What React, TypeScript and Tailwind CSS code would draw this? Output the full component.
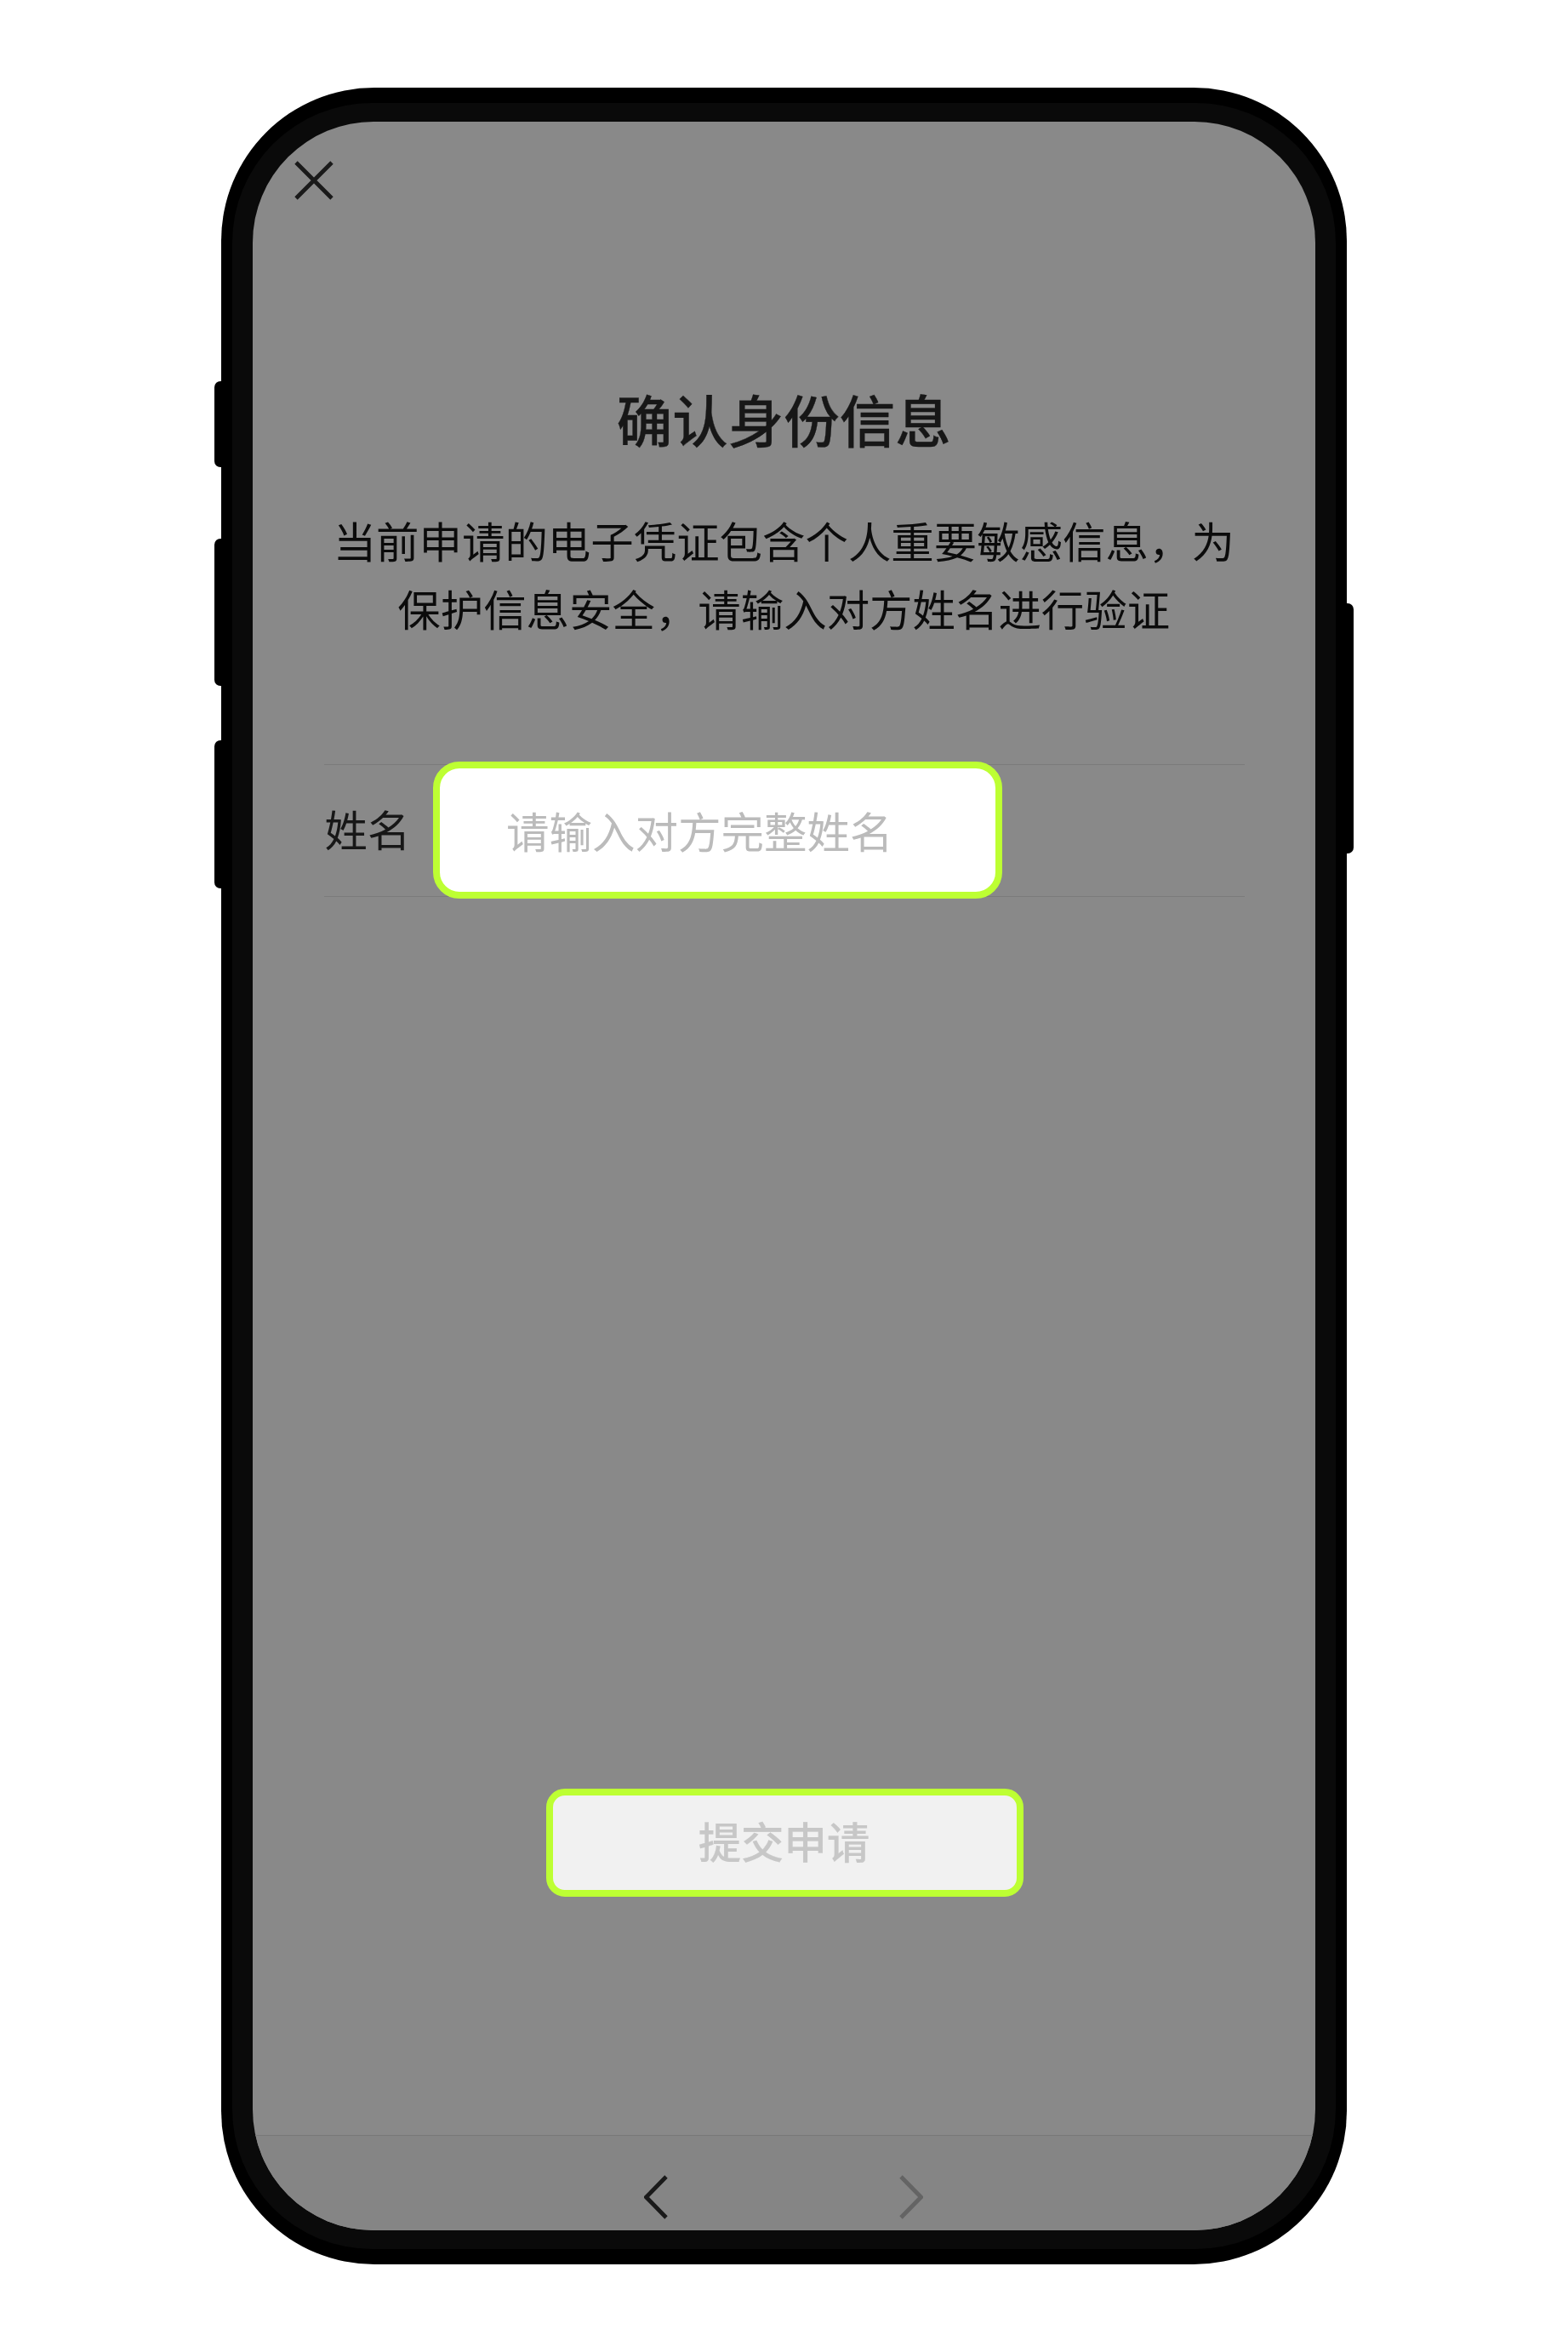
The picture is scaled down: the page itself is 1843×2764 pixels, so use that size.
import type { ReactNode } from "react";

const LEFT_KEYS = ["h-[101px]", "mt-[84px] h-[173.5px]", "mt-[64px] h-[173.5px]"];

function PhoneFrame({ children }: { children: ReactNode }) {
  return (
    <div className="flex items-start pl-[252px] pt-[102.5px]">
      <div className="flex w-2 flex-col pt-[345px]">
        {LEFT_KEYS.map((key) => (
          <div key={key} className={`w-full shrink-0 rounded-l-[7px] bg-black ${key}`} />
        ))}
      </div>
      <div className="h-[2558.5px] w-[1322.5px] rounded-[180px] bg-black px-[13px] py-[18px]">
        <div className="h-full w-full rounded-[164px] bg-[#0a0a0a] px-[24px] py-[22.5px]">
          <div className="flex h-full w-full flex-col overflow-hidden rounded-[142px] bg-[#898989]">
            {children}
          </div>
        </div>
      </div>
      <div className="mt-[606px] h-[294px] w-2 rounded-r-[7px] bg-black" />
    </div>
  );
}

function Chevron({ direction, tone }: { direction: "left" | "right"; tone: string }) {
  return (
    <svg width="28" height="52" viewBox="0 0 28 52" fill="none" className={tone}>
      <path
        d={direction === "left" ? "M26 2 2.5 26 26 50" : "M2 2 25.5 26 2 50"}
        stroke="currentColor"
        strokeWidth="4.8"
      />
    </svg>
  );
}

export default function App() {
  return (
    <main className="h-[2764px] w-[1843px] overflow-hidden bg-white font-['Noto_Sans_CJK_SC',sans-serif]">
      <PhoneFrame>
        <header className="h-[304px] shrink-0 pl-[49px] pt-[46px]">
          <button aria-label="关闭" className="block text-[#1a1a1a]">
            <svg width="46" height="46" viewBox="0 0 46 46" fill="none">
              <path d="M2 2 44 44M44 2 2 44" stroke="currentColor" strokeWidth="4.8" />
            </svg>
          </button>
        </header>

        <section className="flex shrink-0 flex-col items-center text-center">
          <h1 className="text-[65.5px] font-medium leading-[90px] text-[#171717] [-webkit-text-stroke:0.3px_#171717]">
            确认身份信息
          </h1>
          <p className="mt-[57px] text-[50.45px] leading-[80px] text-[#0b0b0b]">
            当前申请的电子凭证包含个人重要敏感信息，为
            <br />
            保护信息安全，请输入对方姓名进行验证
          </p>
        </section>

        <div className="ml-[83.5px] mt-[144px] flex h-[156px] w-[1082px] shrink-0 items-center border-y border-[#7b7b7b]">
          <label className="w-[128px] shrink-0 pb-1 text-[50.4px] leading-[60px] text-[#171717]">
            <span className="pl-px">姓名</span>
          </label>
          <div className="-mb-[3px] -mt-[4px] flex h-[161px] w-[669.5px] shrink-0 items-center rounded-[31px] border-[8.5px] border-[#bdff33] bg-white pb-[2px] pl-[78.5px] text-[50.5px] leading-[60px] text-[#bbbbbb]">
            请输入对方完整姓名
          </div>
        </div>

        <button className="ml-[345px] mt-[1048px] flex h-[127px] w-[561px] shrink-0 items-center justify-center rounded-[22px] border-[8.5px] border-[#bdff33] bg-[#f1f1f1] pb-[6px] pr-[2px] text-[50.4px] font-medium leading-[60px] text-[#c7c7c7] [-webkit-text-stroke:0.2px_#c7c7c7]">
          提交申请
        </button>

        <footer className="mt-auto flex h-[112px] shrink-0 justify-center gap-[272px] border-t border-[#787878] bg-[#858585] pt-[46.5px]">
          <Chevron direction="left" tone="text-[#1a1a1a]" />
          <Chevron direction="right" tone="text-[#646464]" />
        </footer>
      </PhoneFrame>
    </main>
  );
}
